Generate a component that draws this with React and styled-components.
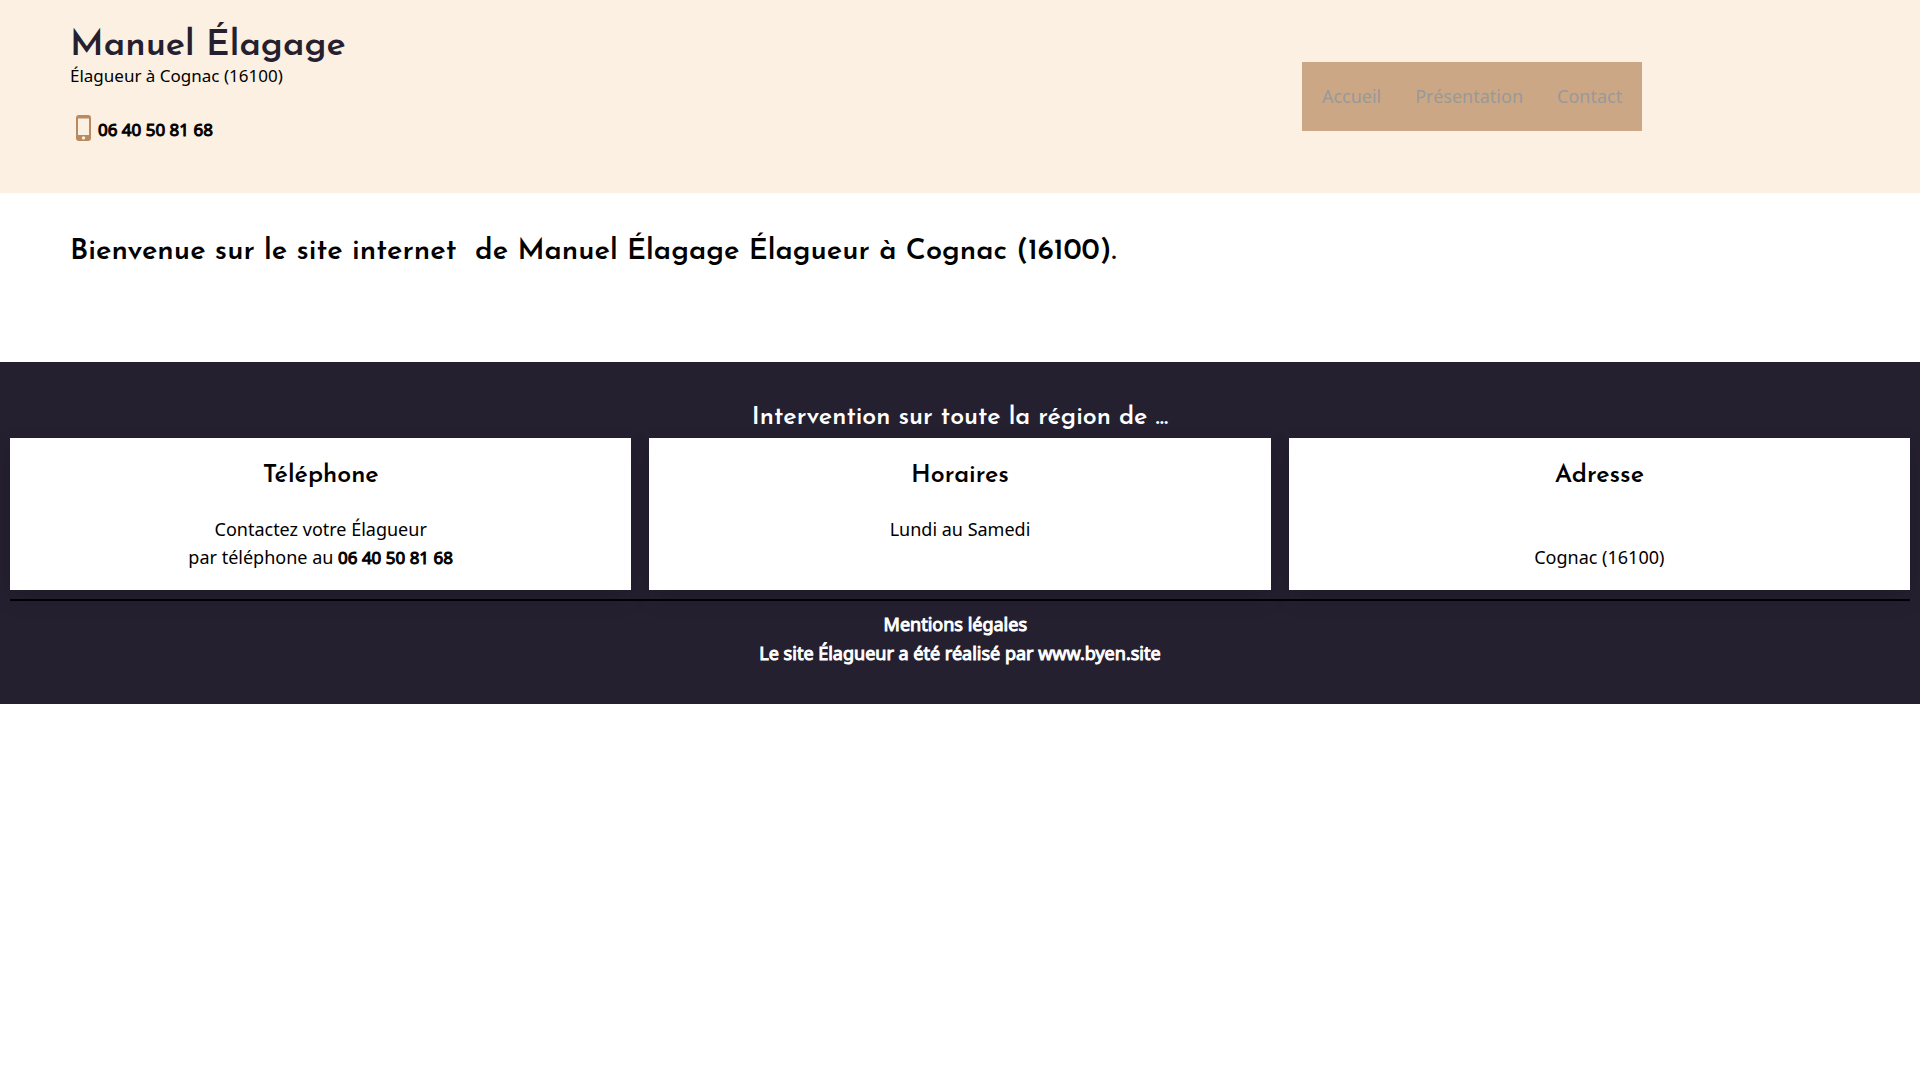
import React from "react";
import styled, { createGlobalStyle } from "styled-components";

const ink = "#242030";

const GlobalStyle = createGlobalStyle`
  *, *::before, *::after { box-sizing: border-box; }
  body {
    margin: 0;
    background: #fff;
    color: #000;
    font-family: "Noto Sans", sans-serif;
    font-size: 18px;
    line-height: 28px;
  }
  h1, h2, h3, p, ul { margin: 0; padding: 0; }
  h1, h2, h3 { font-family: "Josefin Sans", Lato, sans-serif; font-weight: 600; }
  a { color: inherit; text-decoration: none; }
`;

const Header = styled.header`
  display: grid;
  grid-template-columns: 8fr 7fr;
  align-items: center;
  background: #fbf0e1;
`;

const Brand = styled.div`
  padding: 28px 70px 52px;
`;

const SiteTitle = styled.h1`
  color: ${ink};
  font-size: 36px;
  line-height: 36px;
`;

const Tagline = styled.p`
  font-size: 17px;
  line-height: 24px;
`;

const Strong = styled.strong`
  font-weight: 400;
  -webkit-text-stroke: 1px currentColor;
`;

const PhoneNumber = styled(Strong)`
  font-size: 17px;
  line-height: 22px;
`;

const Phone = styled.a`
  display: flex;
  align-items: flex-end;
  gap: 7px;
  margin-top: 27px;
  padding-left: 6px;
`;

const PhoneIcon = () => (
  <svg width="15" height="26" viewBox="0 0 15 26" aria-hidden="true">
    <path
      fill="#b98960"
      fillRule="evenodd"
      d="M3 0h9a3 3 0 0 1 3 3v20a3 3 0 0 1-3 3H3a3 3 0 0 1-3-3V3a3 3 0 0 1 3-3zM2 3.500v16.500h11V3.500zM7.500 21.200a1.700 1.700 0 1 0 0 3.400a1.700 1.700 0 0 0 0-3.400z"
    />
  </svg>
);

const Nav = styled.nav`
  justify-self: center;
  background: #cba785;
`;

const Menu = styled.ul`
  display: flex;
  gap: 34px;
  padding: 20px 20px 21px;
  list-style: none;
  color: #999;
`;

const Main = styled.main`
  padding: 41px 70px 92px;
`;

const Welcome = styled.h2`
  font-size: 29px;
  line-height: 36px;
  white-space: pre-wrap;
`;

const Footer = styled.footer`
  padding: 36px 10px;
  background: ${ink};
  text-align: center;
`;

const Region = styled.h3`
  color: #fff;
  font-size: 25px;
  line-height: 40px;
`;

const Cards = styled.div`
  display: grid;
  grid-template-columns: repeat(3, 1fr);
  gap: 18px;
`;

const Card = styled.section`
  padding: 21px 20px 19px;
  background: #fff;
  box-shadow: 0 8px 20px rgba(0, 0, 0, 0.15);
`;

const CardTitle = styled.h3`
  margin-bottom: 22px;
  font-size: 25px;
  line-height: 34px;
`;

const CardText = styled.p`
  min-height: 56px;
`;

const Rule = styled.hr`
  margin: 9px 0;
  border: 0;
  border-top: 2px solid #000;
`;

const Credits = styled.p`
  color: #fff;
  line-height: 29px;
  white-space: pre-wrap;
`;

const links = ["Accueil", "Présentation", "Contact"];

export default function App() {
  return (
    <>
      <GlobalStyle />
      <Header>
        <Brand>
          <SiteTitle>Manuel Élagage</SiteTitle>
          <Tagline>Élagueur à Cognac (16100)</Tagline>
          <Phone href="tel:0640508168">
            <PhoneIcon />
            <PhoneNumber>06 40 50 81 68</PhoneNumber>
          </Phone>
        </Brand>
        <Nav>
          <Menu>
            {links.map((label) => (
              <li key={label}>
                <a href="#">{label}</a>
              </li>
            ))}
          </Menu>
        </Nav>
      </Header>
      <Main>
        <Welcome>
          {"Bienvenue sur le site internet \u00a0de Manuel Élagage Élagueur à Cognac (16100)."}
        </Welcome>
      </Main>
      <Footer>
        <Region>Intervention sur toute la région de ...</Region>
        <Cards>
          <Card>
            <CardTitle>Téléphone</CardTitle>
            <CardText>
              Contactez votre Élagueur
              <br />
              par téléphone au <PhoneNumber>06 40 50 81 68</PhoneNumber>
            </CardText>
          </Card>
          <Card>
            <CardTitle>Horaires</CardTitle>
            <CardText>Lundi au Samedi</CardText>
          </Card>
          <Card>
            <CardTitle>Adresse</CardTitle>
            <CardText>
              <br />
              Cognac (16100)
            </CardText>
          </Card>
        </Cards>
        <Rule />
        <Credits>
          <a href="#"><Strong>Mentions légales</Strong></a>
          {"\u00a0\u00a0"}
        </Credits>
        <Credits>
          <Strong>
            Le site Élagueur a été réalisé par <a href="#">www.byen.site</a>
          </Strong>
        </Credits>
      </Footer>
    </>
  );
}
